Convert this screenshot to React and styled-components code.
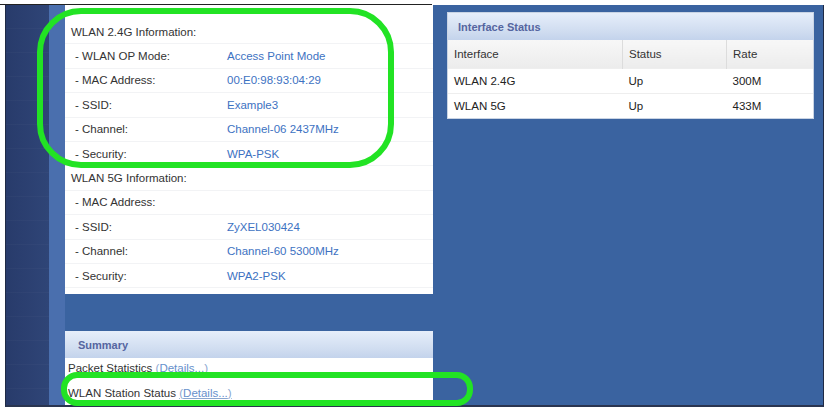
import React from "react";
import styled, { createGlobalStyle } from "styled-components";

const wlan24 = [
  ["- WLAN OP Mode:", "Access Point Mode"],
  ["- MAC Address:", "00:E0:98:93:04:29"],
  ["- SSID:", "Example3"],
  ["- Channel:", "Channel-06 2437MHz"],
  ["- Security:", "WPA-PSK"],
];

const wlan5 = [
  ["- MAC Address:", ""],
  ["- SSID:", "ZyXEL030424"],
  ["- Channel:", "Channel-60 5300MHz"],
  ["- Security:", "WPA2-PSK"],
];

const ifaces = [
  ["WLAN 2.4G", "Up", "300M"],
  ["WLAN 5G", "Up", "433M"],
];

export default function App() {
  return (
    <Page>
      <GlobalStyle />
      <Caption />
      <Frame>
        <Sidebar />
        <Strip />
        <Main>
          <LeftCol>
            <InfoPanel>
              <InfoRow>
                <Label $section>WLAN 2.4G Information:</Label>
              </InfoRow>
              {wlan24.map(([k, v]) => (
                <InfoRow key={"a" + k}>
                  <Label>{k}</Label>
                  <Value>{v}</Value>
                </InfoRow>
              ))}
              <InfoRow>
                <Label $section>WLAN 5G Information:</Label>
              </InfoRow>
              {wlan5.map(([k, v]) => (
                <InfoRow key={"b" + k}>
                  <Label>{k}</Label>
                  <Value>{v}</Value>
                </InfoRow>
              ))}
            </InfoPanel>
            <SummaryPanel>
              <PanelHead $indent>Summary</PanelHead>
              <SummaryRow>
                Packet Statistics <Paren>(<Link>Details...</Link>)</Paren>
              </SummaryRow>
              <SummaryRow>
                WLAN Station Status{" "}
                <Paren $underline>
                  (<Link>Details...</Link>)
                </Paren>
              </SummaryRow>
            </SummaryPanel>
          </LeftCol>
          <RightCol>
            <StatusPanel>
              <PanelHead>Interface Status</PanelHead>
              <Table>
                <thead>
                  <tr>
                    <Th>Interface</Th>
                    <Th>Status</Th>
                    <Th>Rate</Th>
                  </tr>
                </thead>
                <tbody>
                  {ifaces.map((r) => (
                    <tr key={r[0]}>
                      <Td>{r[0]}</Td>
                      <Td>{r[1]}</Td>
                      <Td>{r[2]}</Td>
                    </tr>
                  ))}
                </tbody>
              </Table>
            </StatusPanel>
          </RightCol>
        </Main>
      </Frame>
      <Highlight $x={37} $y={8} $w={357} $h={160} $r={44} />
      <Highlight $x={61} $y={372} $w={412} $h={34} $r={16} />
    </Page>
  );
}

// styling
const GlobalStyle = createGlobalStyle`
  html, body {
    margin: 0;
    padding: 0;
    background: #fff;
  }
  body {
    font-family: "Liberation Sans", Arial, sans-serif;
    font-size: 11.5px;
    color: #333;
  }
`;

const Page = styled.div`
  position: relative;
  width: 829px;
  height: 409px;
  overflow: hidden;
  background: #fff;
`;

const Caption = styled.div`
  height: 4px;
  width: 432px;
  border-bottom: 1px solid #222;
`;

const Frame = styled.div`
  display: flex;
  margin-left: 5px;
  width: 817px;
  height: 400px;
  border: 1px solid #1f2a45;
  border-top: none;
  border-bottom: 2px solid #2a3550;
`;

const Sidebar = styled.div`
  width: 43px;
  background: repeating-linear-gradient(
      180deg,
      transparent 0,
      transparent 23px,
      rgba(255, 255, 255, 0.025) 23px,
      rgba(255, 255, 255, 0.025) 24px
    ),
    linear-gradient(90deg, #283b6b, #2f4577);
`;

const Strip = styled.div`
  width: 16px;
  background: #4a6fae;
`;

const Main = styled.div`
  flex: 1;
  display: flex;
  background: #3a63a0;
`;

const LeftCol = styled.div`
  width: 368px;
  display: flex;
  flex-direction: column;
  justify-content: space-between;
`;

const InfoPanel = styled.div`
  background: #fff;
  padding: 15px 0 6px;
`;

const InfoRow = styled.div`
  display: grid;
  grid-template-columns: 156px 1fr;
  align-items: center;
  height: 24.4px;
  box-sizing: border-box;
  border-bottom: 1px solid #f2f3f5;
  padding-left: 6px;
`;

const Label = styled.span`
  color: #333;
  padding-left: ${(p) => (p.$section ? "0" : "4px")};
  white-space: nowrap;
`;

const Value = styled.span`
  color: #3d72c2;
  white-space: nowrap;
`;

const SummaryPanel = styled.div`
  background: #fff;
`;

const PanelHead = styled.div`
  height: 27px;
  display: flex;
  align-items: center;
  padding-left: ${(p) => (p.$indent ? "13px" : "10px")};
  background: linear-gradient(180deg, #e6eefa 0%, #cfdcf0 70%, #c3d3ec 100%);
  color: #5565a0;
  font-weight: bold;
  font-size: 11px;
`;

const SummaryRow = styled.div`
  height: 24.5px;
  display: flex;
  align-items: center;
  padding-left: 3px;
  color: #333;
  white-space: pre;
  &:nth-of-type(2) {
    margin-top: -2px;
  }
`;

const Paren = styled.span`
  color: #8aa6d0;
  text-decoration: ${(p) => (p.$underline ? "underline" : "none")};
`;

const Link = styled.span`
  color: #6690cc;
`;

const RightCol = styled.div`
  flex: 1;
  padding: 7px 9px 0 14px;
`;

const StatusPanel = styled.div`
  background: #fff;
  border: 1px solid #c9d4e4;
`;

const Table = styled.table`
  width: 100%;
  border-collapse: collapse;
  table-layout: fixed;
  th:nth-child(1) {
    width: 162px;
  }
  th:nth-child(2) {
    width: 91px;
  }
`;

const Th = styled.th`
  height: 28px;
  padding: 0 6px;
  text-align: left;
  font-weight: normal;
  color: #333;
  background: linear-gradient(180deg, #f7f7f7, #ececec);
  border-left: 1px solid #dcdcdc;
  &:first-child {
    border-left: none;
  }
`;

const Td = styled.td`
  height: 24px;
  padding: 0 6px;
  color: #222;
  border-top: 1px solid #eee;
`;

const Highlight = styled.div`
  position: absolute;
  left: ${(p) => p.$x}px;
  top: ${(p) => p.$y}px;
  width: ${(p) => p.$w}px;
  height: ${(p) => p.$h}px;
  box-sizing: border-box;
  border: 6px solid #22e324;
  border-radius: ${(p) => p.$r}px;
  pointer-events: none;
`;
